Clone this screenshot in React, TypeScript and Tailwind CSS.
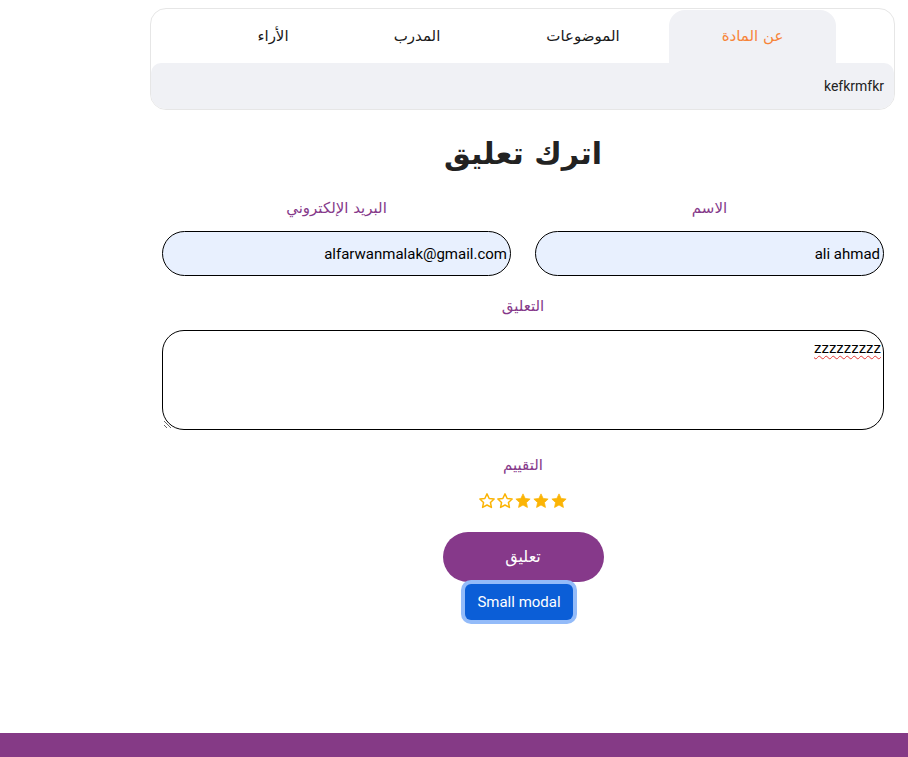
import React from "react";

const Star = ({ filled }: { filled: boolean }) => (
  <svg width="18" height="18" viewBox="0 0 24 24" className="block">
    <path
      d="M12 2.5l2.9 6.1 6.6.8-4.9 4.6 1.3 6.6L12 17.3l-5.9 3.3 1.3-6.6-4.9-4.6 6.6-.8z"
      fill={filled ? "#fbb405" : "#ffffff"}
      stroke="#fbb405"
      strokeWidth={filled ? 1 : 2}
      strokeLinejoin="round"
    />
  </svg>
);

export default function App() {
  const ar = { fontFamily: '"DejaVu Sans", "Noto Sans", sans-serif' };
  const lat = { fontFamily: 'Roboto, "Noto Sans", sans-serif' };
  return (
    <div className="min-h-[757px] bg-white flex flex-col" dir="rtl" style={ar}>
      <div className="pr-[13px] pl-[150px] pt-[8px]">
        <div className="border border-[#e6e6e6] rounded-[16px] overflow-hidden">
          <div className="flex h-[54px] pr-[58px]">
            <div className="w-[167px] mt-[1px] bg-[#f0f1f5] rounded-t-[16px] flex items-center justify-center text-[15px] text-[#f7853a]">
              عن المادة
            </div>
            <div className="w-[172px] flex items-center justify-center text-[15px] text-[#1a1a1a]">
              الموضوعات
            </div>
            <div className="w-[160px] flex items-center justify-center text-[15px] text-[#1a1a1a]">
              المدرب
            </div>
            <div className="w-[128px] flex items-center justify-center text-[15px] text-[#1a1a1a]">
              الأراء
            </div>
          </div>
          <div className="bg-[#f0f1f5] h-[46px] rounded-t-[10px] flex items-center pr-[10px] text-[14px] text-[#222]" style={lat}>
            kefkrmfkr
          </div>
        </div>
      </div>

      <div className="pl-[162px] pr-[24px]">
        <h1 className="text-center font-bold text-[30px] text-[#222] mt-[22px] leading-[44px]">اترك تعليق</h1>

        <div className="grid grid-cols-2 gap-[24px] mt-[20px]">
          <div className="flex flex-col items-center">
            <label className="text-[15px] text-[#86398a] leading-[24px]">الاسم</label>
            <input
              defaultValue="ali ahmad"
              className="mt-[11px] w-full h-[45px] rounded-full border border-black bg-[#e8f0fe] px-[3px] text-[15px] text-black outline-none text-right"
              style={lat}
            />
          </div>
          <div className="flex flex-col items-center">
            <label className="text-[15px] text-[#86398a] leading-[24px]">البريد الإلكتروني</label>
            <input
              defaultValue="alfarwanmalak@gmail.com"
              className="mt-[11px] w-full h-[45px] rounded-full border border-black bg-[#e8f0fe] px-[3px] text-[15px] text-black outline-none text-right"
              style={lat}
            />
          </div>
        </div>

        <div className="flex flex-col items-center mt-[18px]">
          <label className="text-[15px] text-[#86398a] leading-[24px]">التعليق</label>
          <div className="relative w-full mt-[12px]">
            <textarea
              defaultValue="zzzzzzzzz"
              spellCheck={false}
              className="block w-full h-[100px] rounded-[22px] border border-black bg-white px-[2px] pt-[6px] text-[15px] text-black outline-none resize-y"
              style={lat}
            />
            <span
              className="absolute top-[6px] right-[3px] text-[15px] text-transparent underline decoration-wavy decoration-[#e53935] decoration-1 underline-offset-[3px] pointer-events-none"
              style={lat}
            >
              zzzzzzzzz
            </span>
          </div>
        </div>

        <div className="flex flex-col items-center mt-[23px]">
          <label className="text-[15px] text-[#86398a] leading-[24px]">التقييم</label>
          <div className="flex mt-[15px]">
            <Star filled />
            <Star filled />
            <Star filled />
            <Star filled={false} />
            <Star filled={false} />
          </div>
          <button className="mt-[22px] w-[161px] h-[50px] rounded-full bg-[#86398a] text-white text-[16px]">
            تعليق
          </button>
          <button
            className="mt-[2px] mr-[8px] h-[36px] px-[12px] rounded-[6px] bg-[#0b5ed7] text-white text-[15px] ring-4 ring-[#93bbf9]"
            style={lat}
          >
            Small modal
          </button>
        </div>
      </div>

      <div className="mt-auto h-[24px] bg-[#853a86]" />
    </div>
  );
}
